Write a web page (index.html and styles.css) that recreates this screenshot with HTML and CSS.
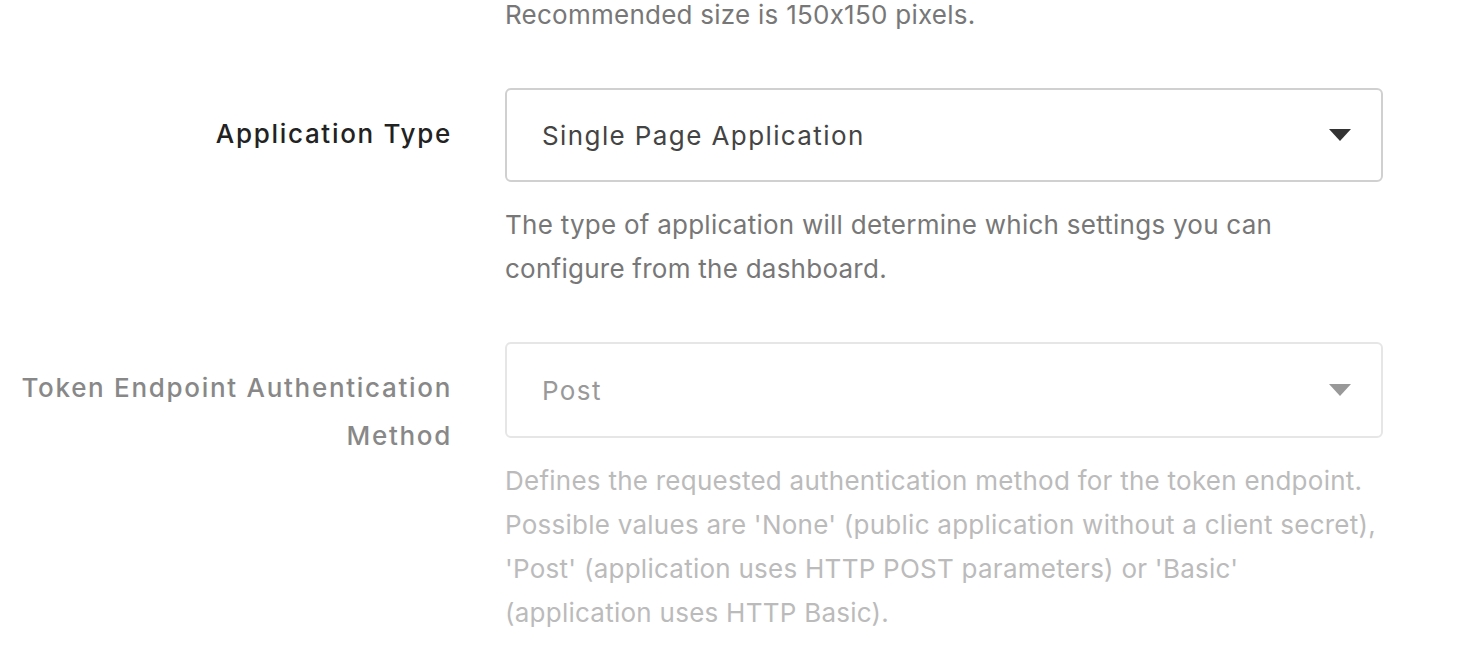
FILE: index.html
```html
<!DOCTYPE html>
<html lang="en">
<head>
  <meta charset="UTF-8">
  <title>Application Settings</title>
  <link rel="stylesheet" href="styles.css">
</head>
<body>

  <!-- Application settings form -->
  <section class="settings">

    <div class="row row-top">
      <div class="label"></div>
      <div class="field">
        <p class="help">Recommended size is 150x150 pixels.</p>
      </div>
    </div>

    <div class="row">
      <label class="label" for="appType">Application Type</label>
      <div class="field">
        <div class="select">
          <span id="appType">Single Page Application</span>
          <span class="caret"></span>
        </div>
        <p class="help">The type of application will determine which settings you can<br>configure from the dashboard.</p>
      </div>
    </div>

    <div class="row disabled">
      <label class="label" for="tokenMethod">Token Endpoint Authentication Method</label>
      <div class="field">
        <div class="select">
          <span id="tokenMethod">Post</span>
          <span class="caret"></span>
        </div>
        <p class="help">Defines the requested authentication method for the token endpoint.<br>Possible values are 'None' (public application without a client secret),<br>'Post' (application uses HTTP POST parameters) or 'Basic'<br>(application uses HTTP Basic).</p>
      </div>
    </div>

  </section>

</body>
</html>
```

FILE: styles.css
```css
body {
  margin: 0;
  padding: 0;
  background: #fff;
  font-family: Inter, "Liberation Sans", sans-serif;
  font-size: 26px;
  font-feature-settings: "calt" 0;
  color: #222;
}

.settings {
  display: flex;
  flex-direction: column;
  gap: 51px;
}

.row {
  display: flex;
  gap: 53px;
}

.row-top {
  margin-top: -7px;
}

/* width includes the trailing letter-spacing */
.label {
  width: 452px;
  flex-shrink: 0;
  padding-top: 22px;
  text-align: right;
  font-weight: 500;
  line-height: 48px;
  letter-spacing: 1.7px;
  color: #222;
}

.field {
  width: 878px;
}

.help {
  margin: 0;
  line-height: 44px;
  letter-spacing: 0.25px;
  color: #777;
}

.select {
  box-sizing: border-box;
  height: 94px;
  display: flex;
  align-items: center;
  justify-content: space-between;
  padding: 0 30px 0 35px;
  border: 2px solid #d0d0d0;
  border-radius: 6px;
  color: #444;
  letter-spacing: 1.4px;
  margin-bottom: 21px;
}

.caret {
  width: 0;
  height: 0;
  border-left: 11px solid transparent;
  border-right: 11px solid transparent;
  border-top: 12px solid #333;
}

/* disabled row */
.disabled .label {
  color: #888;
}

.disabled .select {
  height: 96px;
  border-color: #e6e6e6;
  color: #999;
}

.disabled .caret {
  border-top-color: #999;
}

.disabled .help {
  color: #bbb;
}
```
